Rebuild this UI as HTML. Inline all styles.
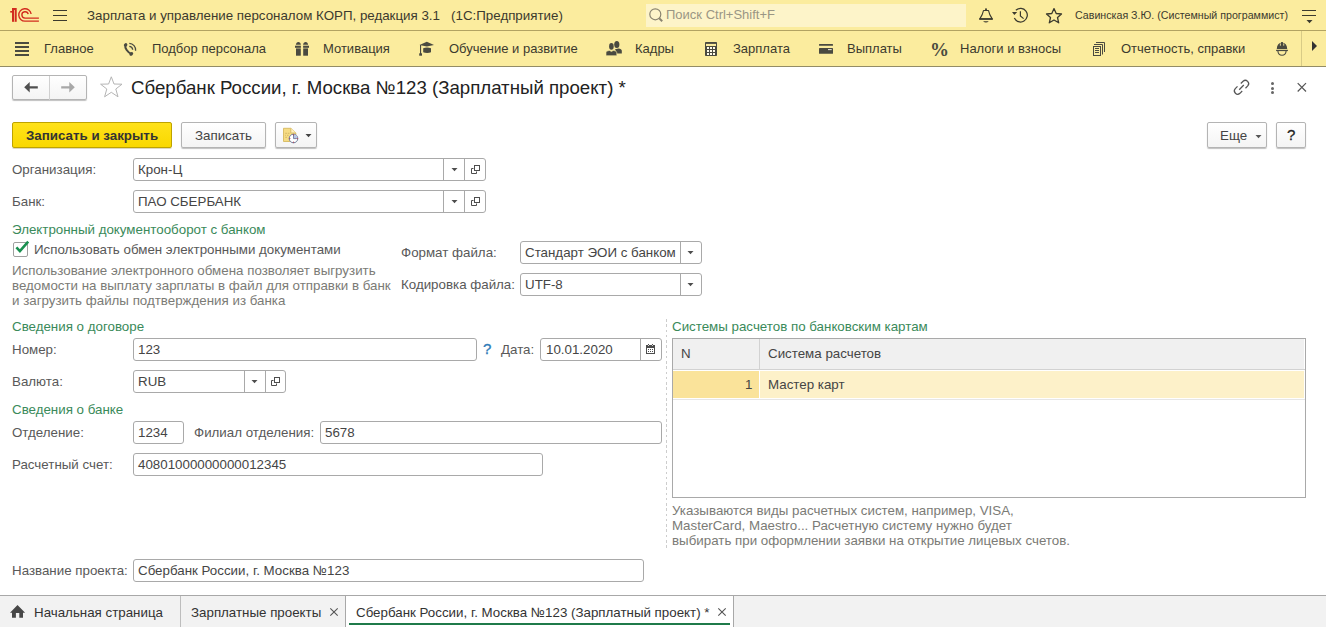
<!DOCTYPE html>
<html><head><meta charset="utf-8">
<style>
*{box-sizing:border-box}
html,body{margin:0;padding:0;width:1326px;height:627px;overflow:hidden;background:#fff;font-family:"Liberation Sans",sans-serif;}
.a{position:absolute}
.t{position:absolute;white-space:pre;font-size:13.33px;line-height:16px;color:#595959}
.s13{font-size:13px}
.bar{position:absolute;left:0;width:1326px;background:#fbec9e}
.pt{position:absolute;white-space:pre;font-size:13px;line-height:16px;color:#3b3a2e}
.fld{position:absolute;border:1px solid #a9a9a9;border-radius:3px;background:#fff}
.fv{position:absolute;white-space:pre;font-size:13.33px;line-height:16px;color:#454545}
.dv{position:absolute;top:0;bottom:0;width:1px;background:#a9a9a9}
.tri{position:absolute;width:0;height:0;border-left:2.5px solid transparent;border-right:2.5px solid transparent;border-top:3px solid #4d4d4d}
.grp{position:absolute;white-space:pre;font-size:13.33px;line-height:16px;color:#3a8a5a}
.desc{position:absolute;white-space:pre;font-size:13.33px;line-height:15px;color:#7b7b76}
.btn{position:absolute;border:1px solid #b4b4b4;border-radius:2px;background:linear-gradient(#fff,#f4f4f4);box-shadow:0 1px 1px rgba(0,0,0,.25)}
</style></head><body>

<!-- ===== Title bar ===== -->
<div class="bar" style="top:0;height:30px"></div>
<div class="a" style="left:0;top:30px;width:1326px;height:1px;background:#b2a362"></div>
<svg class="a" style="left:0;top:0" width="42" height="30" viewBox="0 0 42 30">
  <g fill="#d22c1f">
    <rect x="12" y="8" width="4.7" height="13.8"/>
    <rect x="10.2" y="11" width="2" height="1.6"/>
  </g>
  <rect x="14.1" y="10" width="0.7" height="11.8" fill="#fbec9e"/>
  <g fill="none" stroke="#d22c1f" stroke-width="1.4">
    <path d="M31.1 14 A6.2 6.2 0 1 0 25 21.1 L38.9 21.1"/>
    <path d="M28.2 14.2 A3.2 3.2 0 1 0 25 18.1 L38.9 18.1"/>
  </g>
</svg>
<div class="a" style="left:53px;top:10px;width:14px;height:1px;background:#3b3a2e"></div>
<div class="a" style="left:53px;top:15px;width:14px;height:1px;background:#3b3a2e"></div>
<div class="a" style="left:53px;top:20px;width:14px;height:1px;background:#3b3a2e"></div>
<div class="pt" style="left:87px;top:8px;font-size:13.33px">Зарплата и управление персоналом КОРП, редакция 3.1   (1С:Предприятие)</div>

<div class="a" style="left:646px;top:4px;width:320px;height:23px;background:#fdf4c9"></div>
<svg class="a" style="left:646px;top:4px" width="22" height="22" viewBox="0 0 22 22">
  <circle cx="9.3" cy="10.3" r="5.5" fill="none" stroke="#8a8470" stroke-width="1.2"/>
  <path d="M13.2 14.2 L16.2 17.2" stroke="#8a8470" stroke-width="2"/>
</svg>
<div class="pt" style="left:666px;top:7px;color:#9a9684">Поиск Ctrl+Shift+F</div>

<!-- bell -->
<svg class="a" style="left:976px;top:5px" width="20" height="20" viewBox="0 0 20 20">
  <path d="M3.8 13.9 C5.6 11.2 6.9 9 7.5 5.5 L12.5 5.5 C13.1 9 14.4 11.2 16.2 13.9 Z" fill="none" stroke="#3b3a2e" stroke-width="1.15" stroke-linejoin="round"/>
  <rect x="3.3" y="13.3" width="13.5" height="1.5" fill="#3b3a2e"/>
  <circle cx="10" cy="4.3" r="1" fill="#3b3a2e"/>
  <path d="M7 16.2 Q10 19 12.8 16.2 Z" fill="#3b3a2e"/>
</svg>
<!-- history -->
<svg class="a" style="left:1010px;top:5px" width="20" height="20" viewBox="0 0 20 20">
  <path d="M5.86 5.23 A6.8 6.8 0 1 1 4.34 13.07" fill="none" stroke="#3b3a2e" stroke-width="1.25"/>
  <path d="M2 7 L7.2 7 L4.4 9.9 Z" fill="#3b3a2e"/>
  <path d="M10.4 6.2 L10.4 11 L13.6 13.6" fill="none" stroke="#3b3a2e" stroke-width="1.2"/>
</svg>
<!-- star -->
<svg class="a" style="left:1044px;top:6px" width="20" height="20" viewBox="0 0 20 20">
  <path d="M10 2.6 L12.2 7.5 L17.5 8 L13.5 11.5 L14.7 16.8 L10 14 L5.3 16.8 L6.5 11.5 L2.5 8 L7.8 7.5 Z" fill="none" stroke="#3b3a2e" stroke-width="1.3" stroke-linejoin="round"/>
</svg>
<div class="pt" style="left:1075px;top:8px;font-size:10.67px;line-height:14px">Савинская З.Ю. (Системный программист)</div>
<!-- menu icon -->
<div class="a" style="left:1302px;top:10px;width:14px;height:1px;background:#3b3a2e"></div>
<div class="a" style="left:1302px;top:15px;width:14px;height:1px;background:#3b3a2e"></div>
<svg class="a" style="left:1306px;top:20px" width="7" height="4" viewBox="0 0 7 4"><path d="M0.5 0 L6.5 0 L3.5 3.2 Z" fill="#3b3a2e"/></svg>

<!-- ===== Sections panel ===== -->
<div class="bar" style="top:31px;height:35px"></div>
<div class="a" style="left:0;top:66px;width:1326px;height:1px;background:#938c66"></div>
<div class="a" style="left:1301px;top:31px;width:1px;height:35px;background:#d8cb86"></div>
<!-- hamburger -->
<div class="a" style="left:15px;top:42px;width:14px;height:2px;background:#4a4a40"></div>
<div class="a" style="left:15px;top:46px;width:14px;height:2px;background:#4a4a40"></div>
<div class="a" style="left:15px;top:50px;width:14px;height:2px;background:#4a4a40"></div>
<div class="a" style="left:15px;top:54px;width:14px;height:2px;background:#4a4a40"></div>
<div class="pt" style="left:44px;top:41px">Главное</div>
<!-- phone -->
<svg class="a" style="left:120px;top:40px" width="18" height="18" viewBox="0 0 18 18">
  <path d="M5.4 5 C4.6 8 7.6 12.4 11.3 13.8" fill="none" stroke="#4a4a40" stroke-width="2"/>
  <ellipse cx="5.6" cy="4.9" rx="1.9" ry="1.6" transform="rotate(-40 5.6 4.9)" fill="#4a4a40"/>
  <ellipse cx="11.3" cy="13.9" rx="2.1" ry="1.6" transform="rotate(-40 11.3 13.9)" fill="#4a4a40"/>
  <path d="M9.3 6.3 A3.7 3.7 0 0 1 12.7 9.7" fill="none" stroke="#4a4a40" stroke-width="1.3"/>
  <path d="M9.3 3.4 A6.6 6.6 0 0 1 15.6 10.7" fill="none" stroke="#4a4a40" stroke-width="1.3"/>
</svg>
<div class="pt" style="left:152px;top:41px">Подбор персонала</div>
<!-- gift -->
<svg class="a" style="left:294px;top:40px" width="16" height="17" viewBox="0 0 16 17">
  <path d="M1.9 4.8 C1.9 0.9 6.8 0.9 6.9 4.8 Z" fill="#4a4a40"/>
  <path d="M9.1 4.8 C9.2 0.9 14.1 0.9 14.1 4.8 Z" fill="#4a4a40"/>
  <rect x="1" y="5.7" width="5.9" height="2.1" fill="#4a4a40"/>
  <rect x="9.1" y="5.7" width="5.9" height="2.1" fill="#4a4a40"/>
  <rect x="2" y="8.4" width="4.8" height="7.3" fill="#4a4a40"/>
  <rect x="9.2" y="8.4" width="4.8" height="7.3" fill="#4a4a40"/>
</svg>
<div class="pt" style="left:323px;top:41px">Мотивация</div>
<!-- graduation cap -->
<svg class="a" style="left:418px;top:40px" width="18" height="17" viewBox="0 0 18 17">
  <path d="M1.5 4.9 L8.8 1.8 L16 4.9 L8.8 6.6 Z" fill="#4a4a40"/>
  <path d="M5.2 8.3 C7.5 7.3 10.5 7.3 13 8.3 L13 12.2 C11 13.2 7.3 13.2 5.2 12.2 Z" fill="#4a4a40"/>
  <rect x="2" y="5" width="1.1" height="9" fill="#4a4a40"/>
  <rect x="1.2" y="13.3" width="2.8" height="2.4" fill="#4a4a40"/>
</svg>
<div class="pt" style="left:449px;top:41px">Обучение и развитие</div>
<!-- people -->
<svg class="a" style="left:604px;top:40px" width="20" height="17" viewBox="0 0 20 17">
  <ellipse cx="12.8" cy="4.6" rx="2.6" ry="3.5" fill="#4a4a40"/>
  <path d="M11 9.2 L14.5 8.4 C16.5 8.6 17.8 9.3 17.8 10.8 L17.8 13.6 L13 13.6 Z" fill="#4a4a40"/>
  <ellipse cx="7.4" cy="6.4" rx="2.7" ry="3.6" fill="#fbec9e"/>
  <ellipse cx="7.4" cy="6.4" rx="2.3" ry="3.3" fill="#4a4a40"/>
  <path d="M2 15.7 L2 12.8 C2 11.3 3.2 10.8 5.5 10.5 L7.4 11.5 L9.3 10.5 C11.6 10.8 12.8 11.3 12.8 12.8 L12.8 15.7 Z" fill="#4a4a40" stroke="#fbec9e" stroke-width="0.6"/>
</svg>
<div class="pt" style="left:635px;top:41px">Кадры</div>
<!-- calculator -->
<svg class="a" style="left:704px;top:41px" width="14" height="16" viewBox="0 0 14 16">
  <rect x="1" y="1" width="12" height="14" rx="0.8" fill="#4a4a40"/>
  <rect x="2" y="2.9" width="10" height="2.1" fill="#fbec9e"/>
  <g fill="#fffbe8">
    <rect x="3" y="6" width="2" height="2"/><rect x="6" y="6" width="2" height="2"/><rect x="9" y="6" width="2" height="2"/>
    <rect x="3" y="9" width="2" height="2"/><rect x="6" y="9" width="2" height="2"/><rect x="9" y="9" width="2" height="2"/>
    <rect x="3" y="12" width="2" height="2"/><rect x="6" y="12" width="2" height="2"/><rect x="9" y="12" width="2" height="2"/>
  </g>
</svg>
<div class="pt" style="left:733px;top:41px">Зарплата</div>
<!-- card -->
<svg class="a" style="left:818px;top:41px" width="16" height="15" viewBox="0 0 16 15">
  <rect x="1" y="3" width="14" height="1.8" rx="0.6" fill="#4a4a40"/>
  <rect x="1" y="7" width="14" height="5.8" rx="0.6" fill="#4a4a40"/>
  <rect x="10" y="8.2" width="3.7" height="0.9" fill="#fffbe8"/>
</svg>
<div class="pt" style="left:847px;top:41px">Выплаты</div>
<div class="a" style="left:930px;top:40px;white-space:pre;font:bold 19px/20px 'Liberation Serif';color:#4a4a40">%</div>
<div class="pt" style="left:960px;top:41px">Налоги и взносы</div>
<!-- docs -->
<svg class="a" style="left:1092px;top:41px" width="14" height="16" viewBox="0 0 14 16">
  <g fill="none" stroke="#4a4a40" stroke-width="1">
    <rect x="1.5" y="5.5" width="7" height="9"/>
    <path d="M2 3.5 L10.5 3.5 L10.5 13.5"/>
    <path d="M4 1.5 L12.5 1.5 L12.5 11"/>
  </g>
  <g fill="none" stroke="#4a4a40" stroke-width="1.1">
    <path d="M3 7.5 L7 7.5 M3 9.5 L7 9.5 M3 11.5 L7 11.5"/>
  </g>
</svg>
<div class="pt" style="left:1121px;top:41px">Отчетность, справки</div>
<!-- helmet -->
<svg class="a" style="left:1275px;top:41px" width="14" height="16" viewBox="0 0 14 16">
  <path d="M1.8 8 C1.8 4.2 3.8 2.1 6.1 1.7 L6.1 0.9 L7.9 0.9 L7.9 1.7 C10.2 2.1 12.2 4.2 12.2 8 Z" fill="#4a4a40"/>
  <rect x="4.9" y="2.4" width="0.9" height="2.3" fill="#f3e6a0"/>
  <rect x="8.3" y="2.4" width="0.9" height="2.3" fill="#f3e6a0"/>
  <rect x="1.1" y="8.8" width="11.8" height="1.3" fill="#4a4a40"/>
  <path d="M2.9 10 C3.1 13 4.9 14.3 7 14.3 C9.1 14.3 10.9 13 11.1 10" fill="none" stroke="#4a4a40" stroke-width="1.1"/>
</svg>
<div class="a" style="left:1312px;top:41px;width:0;height:0;border-top:5px solid transparent;border-bottom:5px solid transparent;border-left:5.5px solid #333"></div>


<!-- ===== Form header ===== -->
<!-- nav buttons -->
<div class="btn" style="left:12px;top:75px;width:75px;height:25px"></div>
<div class="a" style="left:49px;top:76px;width:1px;height:24px;background:#d0d0d0"></div>
<svg class="a" style="left:20px;top:78px" width="22" height="18" viewBox="0 0 22 18">
  <path d="M4.2 9.3 L9.7 4 L9.7 8.2 L17.8 8.2 L17.8 10.6 L9.7 10.6 L9.7 14.6 Z" fill="#505050"/>
</svg>
<svg class="a" style="left:57px;top:78px" width="22" height="18" viewBox="0 0 22 18">
  <path d="M17.8 9.3 L12.3 4 L12.3 8.2 L4.2 8.2 L4.2 10.6 L12.3 10.6 L12.3 14.6 Z" fill="#a8a8a8"/>
</svg>
<svg class="a" style="left:99px;top:75px" width="25" height="24" viewBox="0 0 25 24">
  <path d="M12.3 1.8 L15 9 L23 9.2 L16.8 14 L19 21.8 L12.3 17.3 L5.6 21.8 L7.8 14 L1.6 9.2 L9.6 9 Z" fill="none" stroke="#b5b5b5" stroke-width="1" stroke-linejoin="miter"/>
</svg>
<div class="a" style="left:131px;top:77px;white-space:pre;font-size:18.67px;line-height:22px;color:#222">Сбербанк России, г. Москва №123 (Зарплатный проект) *</div>
<!-- link -->
<svg class="a" style="left:1228px;top:74px" width="30" height="26" viewBox="0 0 30 26">
  <g fill="none" stroke="#555" stroke-width="1.25">
    <path d="M9.5 12.4 L7.27 14.67 A3.3 3.3 0 0 0 11.93 19.33 L14.2 17.06"/>
    <path d="M12.8 9.5 L15.07 7.27 A3.3 3.3 0 0 1 19.73 11.93 L17.5 14.2"/>
    <path d="M11.2 15.8 L15.8 11"/>
  </g>
</svg>
<!-- more -->
<div class="a" style="left:1271px;top:82px;width:3px;height:3px;border-radius:50%;background:#666"></div>
<div class="a" style="left:1271px;top:86.5px;width:3px;height:3px;border-radius:50%;background:#666"></div>
<div class="a" style="left:1271px;top:91px;width:3px;height:3px;border-radius:50%;background:#666"></div>
<!-- close -->
<svg class="a" style="left:1295px;top:81px" width="14" height="13" viewBox="0 0 14 13">
  <path d="M2.7 2.2 L11 10.5 M11 2.2 L2.7 10.5" stroke="#555" stroke-width="1.2"/>
</svg>

<!-- command bar -->
<div class="a" style="left:12px;top:122px;width:160px;height:26px;border:1px solid #bea300;border-radius:2px;background:linear-gradient(#ffe21a,#f9d800);box-shadow:0 1px 0 rgba(120,100,0,.25)"></div>
<div class="a" style="left:26px;top:128px;white-space:pre;font:bold 13.33px/16px 'Liberation Sans';color:#333">Записать и закрыть</div>
<div class="btn" style="left:181px;top:122px;width:85px;height:26px"></div>
<div class="t" style="left:195px;top:128px;color:#444">Записать</div>
<div class="btn" style="left:275px;top:122px;width:42px;height:26px"></div>
<svg class="a" style="left:281px;top:126px" width="20" height="20" viewBox="0 0 20 20">
  <path d="M2.5 2.3 L9.8 2.3 L14.8 7 L14.8 15.5 L2.5 15.5 Z" fill="#f6dc84" stroke="#d6b960" stroke-width="0.9" stroke-linejoin="round"/>
  <path d="M9.8 2.3 L9.8 7 L14.8 7" fill="#fff0c0" stroke="#d6b960" stroke-width="0.9"/>
  <path d="M4.2 7.3 L6 7.3 M6.8 7.3 L8.5 7.3 M4.2 9.3 L5 9.3 M6 9.3 L7.5 9.3 M4.2 11.3 L6 11.3" stroke="#cdb060" stroke-width="0.8"/>
  <circle cx="12.5" cy="12.5" r="4.3" fill="#fff" stroke="#6d7c9c" stroke-width="1"/>
  <path d="M12.5 12.5 L12.5 8.6 A3.9 3.9 0 0 1 16.4 12.5 Z" fill="#b8c6e6"/>
  <path d="M12.5 8.5 L12.5 12.6 L15.5 12.6" fill="none" stroke="#6d7c9c" stroke-width="0.9"/>
  <g fill="#b03040"><rect x="12" y="8.3" width="1" height="1"/><rect x="12" y="15.7" width="1" height="1"/><rect x="8.3" y="12" width="1" height="1"/><rect x="15.7" y="12" width="1" height="1"/></g>
</svg>
<svg class="a" style="left:305px;top:134px" width="7" height="4" viewBox="0 0 7 4"><path d="M0.5 0 L6.5 0 L3.5 3.2 Z" fill="#444"/></svg>

<div class="btn" style="left:1207px;top:122px;width:60px;height:26px"></div>
<div class="t" style="left:1220px;top:128px;color:#444">Еще</div>
<svg class="a" style="left:1255px;top:135px" width="7" height="4" viewBox="0 0 7 4"><path d="M0.5 0 L6.5 0 L3.5 3.2 Z" fill="#555"/></svg>
<div class="btn" style="left:1276px;top:122px;width:30px;height:26px"></div>
<div class="a" style="left:1287px;top:126px;white-space:pre;font:15px/18px 'Liberation Sans';color:#222;-webkit-text-stroke:0.3px #222">?</div>


<!-- ===== Form body ===== -->
<!-- Организация -->
<div class="t" style="left:12px;top:162px">Организация:</div>
<div class="fld" style="left:133px;top:158px;width:353px;height:23px">
  <div class="dv" style="left:309px"></div><div class="dv" style="left:330px"></div>
</div>
<div class="fv" style="left:138px;top:162px">Крон-Ц</div>
<svg class="a" style="left:451px;top:168px" width="7" height="4" viewBox="0 0 7 4"><path d="M0.5 0 L6.5 0 L3.5 3.2 Z" fill="#4d4d4d"/></svg>
<svg class="a" style="left:470px;top:164px" width="12" height="12" viewBox="0 0 12 12"><g fill="none" stroke="#4d4d4d" stroke-width="1"><rect x="4.5" y="1.5" width="5" height="5"/><path d="M3.5 4.5 H1.5 V9.5 H6.5 V7.5"/></g></svg>

<!-- Банк -->
<div class="t" style="left:12px;top:194px">Банк:</div>
<div class="fld" style="left:133px;top:190px;width:353px;height:23px">
  <div class="dv" style="left:309px"></div><div class="dv" style="left:330px"></div>
</div>
<div class="fv" style="left:138px;top:194px">ПАО СБЕРБАНК</div>
<svg class="a" style="left:451px;top:200px" width="7" height="4" viewBox="0 0 7 4"><path d="M0.5 0 L6.5 0 L3.5 3.2 Z" fill="#4d4d4d"/></svg>
<svg class="a" style="left:470px;top:196px" width="12" height="12" viewBox="0 0 12 12"><g fill="none" stroke="#4d4d4d" stroke-width="1"><rect x="4.5" y="1.5" width="5" height="5"/><path d="M3.5 4.5 H1.5 V9.5 H6.5 V7.5"/></g></svg>

<div class="grp" style="left:12px;top:222px">Электронный документооборот с банком</div>
<div class="a" style="left:13px;top:242px;width:15px;height:15px;border:1px solid #a0a0a0;border-radius:2px;background:#fff"></div>
<svg class="a" style="left:13px;top:239px" width="18" height="16" viewBox="0 0 18 16"><path d="M3.4 8.4 L6.9 12.1 L15.2 2.6" fill="none" stroke="#1a9050" stroke-width="2.6" stroke-linecap="butt"/></svg>
<div class="t" style="left:34px;top:242px">Использовать обмен электронными документами</div>
<div class="desc" style="left:12px;top:263px">Использование электронного обмена позволяет выгрузить
ведомости на выплату зарплаты в файл для отправки в банк
и загрузить файлы подтверждения из банка</div>

<div class="t" style="left:401px;top:245px">Формат файла:</div>
<div class="fld" style="left:520px;top:241px;width:182px;height:23px"><div class="dv" style="left:159px"></div></div>
<div class="fv" style="left:525px;top:245px">Стандарт ЭОИ с банком</div>
<svg class="a" style="left:687px;top:251px" width="7" height="4" viewBox="0 0 7 4"><path d="M0.5 0 L6.5 0 L3.5 3.2 Z" fill="#4d4d4d"/></svg>
<div class="t" style="left:401px;top:277px">Кодировка файла:</div>
<div class="fld" style="left:520px;top:273px;width:182px;height:23px"><div class="dv" style="left:159px"></div></div>
<div class="fv" style="left:525px;top:277px">UTF-8</div>
<svg class="a" style="left:687px;top:283px" width="7" height="4" viewBox="0 0 7 4"><path d="M0.5 0 L6.5 0 L3.5 3.2 Z" fill="#4d4d4d"/></svg>

<!-- Сведения о договоре -->
<div class="grp" style="left:12px;top:319px">Сведения о договоре</div>
<div class="t" style="left:12px;top:342px">Номер:</div>
<div class="fld" style="left:133px;top:338px;width:344px;height:23px"></div>
<div class="fv" style="left:138px;top:342px">123</div>
<div class="a" style="left:483px;top:340px;white-space:pre;font:15px/18px 'Liberation Sans';color:#2f7cb8;-webkit-text-stroke:0.35px #2f7cb8">?</div>
<div class="t" style="left:501px;top:342px">Дата:</div>
<div class="fld" style="left:540px;top:338px;width:122px;height:23px"><div class="dv" style="left:99px"></div></div>
<div class="fv" style="left:546px;top:342px">10.01.2020</div>
<svg class="a" style="left:645px;top:343px" width="11" height="12" viewBox="0 0 11 12" shape-rendering="crispEdges">
  <rect x="1" y="2" width="9" height="9" fill="#4d4d4d"/>
  <rect x="2" y="5" width="7" height="5" fill="#fff"/>
  <rect x="3" y="1" width="1" height="1" fill="#4d4d4d"/><rect x="7" y="1" width="1" height="1" fill="#4d4d4d"/>
  <rect x="3" y="2" width="1" height="1" fill="#d8d8d8"/><rect x="7" y="2" width="1" height="1" fill="#d8d8d8"/>
  <g fill="#4d4d4d"><rect x="3" y="6" width="1" height="1"/><rect x="5" y="6" width="1" height="1"/><rect x="7" y="6" width="1" height="1"/>
  <rect x="3" y="8" width="1" height="1"/><rect x="5" y="8" width="1" height="1"/><rect x="7" y="8" width="1" height="1"/></g>
</svg>

<div class="t" style="left:12px;top:374px">Валюта:</div>
<div class="fld" style="left:133px;top:370px;width:153px;height:23px">
  <div class="dv" style="left:110px"></div><div class="dv" style="left:131px"></div>
</div>
<div class="fv" style="left:138px;top:374px">RUB</div>
<svg class="a" style="left:251px;top:380px" width="7" height="4" viewBox="0 0 7 4"><path d="M0.5 0 L6.5 0 L3.5 3.2 Z" fill="#4d4d4d"/></svg>
<svg class="a" style="left:270px;top:376px" width="12" height="12" viewBox="0 0 12 12"><g fill="none" stroke="#4d4d4d" stroke-width="1"><rect x="4.5" y="1.5" width="5" height="5"/><path d="M3.5 4.5 H1.5 V9.5 H6.5 V7.5"/></g></svg>

<div class="grp" style="left:12px;top:402px">Сведения о банке</div>
<div class="t" style="left:12px;top:425px">Отделение:</div>
<div class="fld" style="left:133px;top:421px;width:51px;height:23px"></div>
<div class="fv" style="left:138px;top:425px">1234</div>
<div class="t" style="left:194px;top:425px">Филиал отделения:</div>
<div class="fld" style="left:320px;top:421px;width:342px;height:23px"></div>
<div class="fv" style="left:325px;top:425px">5678</div>
<div class="t" style="left:12px;top:457px">Расчетный счет:</div>
<div class="fld" style="left:133px;top:453px;width:410px;height:23px"></div>
<div class="fv" style="left:138px;top:457px">40801000000000012345</div>

<!-- separator -->
<div class="a" style="left:666px;top:319px;width:1px;height:231px;background:repeating-linear-gradient(#cdcdcd 0 2.6px,transparent 2.6px 5.26px)"></div>

<!-- right table -->
<div class="grp" style="left:672px;top:319px">Системы расчетов по банковским картам</div>
<div class="a" style="left:672px;top:338px;width:634px;height:160px;border:1px solid #a9a9a9;background:#fff">
  <div class="a" style="left:0;top:0;width:631px;height:30px;background:#f0f0f0"></div>
  <div class="a" style="left:0;top:30px;width:632px;height:1px;background:#d2d2d2"></div>
  <div class="a" style="left:86px;top:0;width:1px;height:30px;background:#d2d2d2"></div>
  <div class="a" style="left:0;top:32px;width:86px;height:27px;background:#fae39a"></div>
  <div class="a" style="left:87px;top:32px;width:544px;height:27px;background:#fdf1c9"></div>
  <div class="a" style="left:0;top:60px;width:632px;height:1px;background:#e6e6e6"></div>
</div>
<div class="fv" style="left:681px;top:346px">N</div>
<div class="fv" style="left:768px;top:346px">Система расчетов</div>
<div class="fv" style="left:745px;top:377px">1</div>
<div class="fv" style="left:768px;top:377px">Мастер карт</div>
<div class="desc" style="left:672px;top:503px">Указываются виды расчетных систем, например, VISA,
MasterCard, Maestro... Расчетную систему нужно будет
выбирать при оформлении заявки на открытие лицевых счетов.</div>

<!-- Название проекта -->
<div class="t" style="left:12px;top:563px">Название проекта:</div>
<div class="fld" style="left:133px;top:559px;width:511px;height:23px"></div>
<div class="fv" style="left:138px;top:563px">Сбербанк России, г. Москва №123</div>


<!-- ===== Tabs ===== -->
<div class="a" style="left:0;top:595px;width:1326px;height:32px;background:#f2f2f2;border-top:1px solid #a8a8a8"></div>
<div class="a" style="left:346px;top:596px;width:388px;height:31px;background:#fff"></div>
<div class="a" style="left:180px;top:596px;width:1px;height:31px;background:#bdbdbd"></div>
<div class="a" style="left:345px;top:596px;width:1px;height:31px;background:#a8a8a8"></div>
<div class="a" style="left:733px;top:596px;width:1px;height:31px;background:#a8a8a8"></div>
<svg class="a" style="left:9px;top:603px" width="17" height="16" viewBox="0 0 17 16">
  <path d="M8.5 2.1 L1 9.7 L3 9.7 L3 14.8 L6.9 14.8 L6.9 10 L10.3 10 L10.3 14.8 L14 14.8 L14 9.7 L16.1 9.7 Z" fill="#474747"/>
</svg>
<div class="t" style="left:34px;top:605px;color:#333">Начальная страница</div>
<div class="t" style="left:191px;top:605px;color:#333">Зарплатные проекты</div>
<svg class="a" style="left:329px;top:607px" width="10" height="10" viewBox="0 0 10 10"><path d="M1.3 1.3 L8.7 8.7 M8.7 1.3 L1.3 8.7" stroke="#555" stroke-width="1.1"/></svg>
<div class="t" style="left:356px;top:605px;color:#333">Сбербанк России, г. Москва №123 (Зарплатный проект) *</div>
<svg class="a" style="left:717px;top:607px" width="10" height="10" viewBox="0 0 10 10"><path d="M1.3 1.3 L8.7 8.7 M8.7 1.3 L1.3 8.7" stroke="#555" stroke-width="1.1"/></svg>
<div class="a" style="left:349px;top:623px;width:381px;height:2px;background:#1f7a4a"></div>


</body></html>
